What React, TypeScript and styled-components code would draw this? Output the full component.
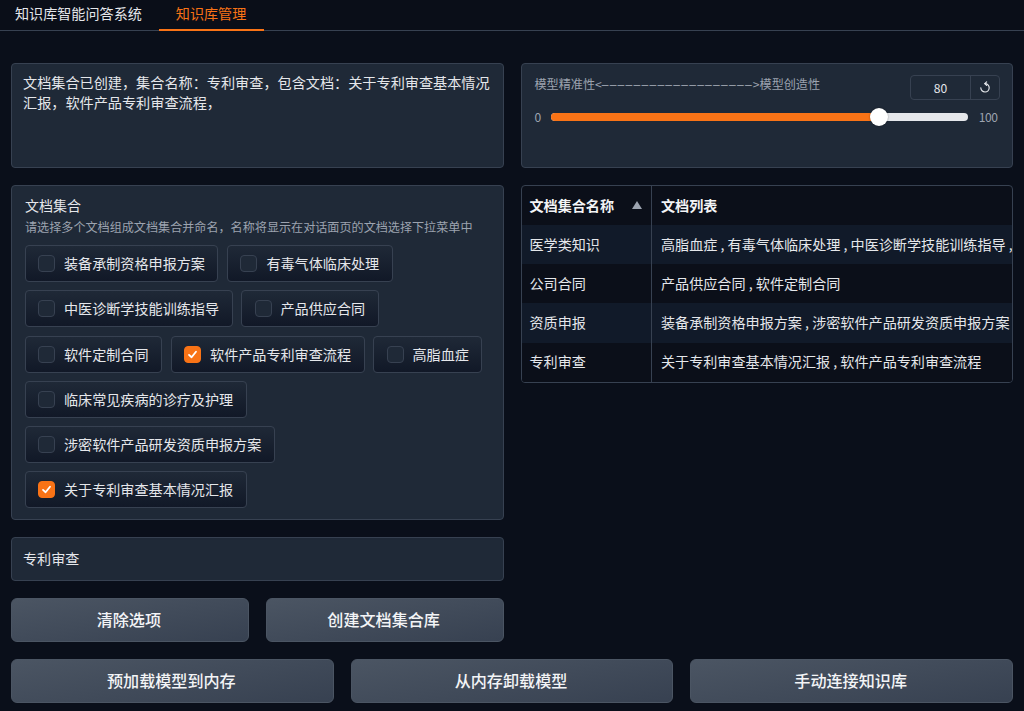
import React from "react";
import styled, { createGlobalStyle } from "styled-components";

const Global = createGlobalStyle`
  html, body { margin: 0; padding: 0; background: #0a0f1a; }
  body { font-family: "Noto Sans CJK SC", "Noto Sans", sans-serif; color: #e5e7eb; }
  * { box-sizing: border-box; }
`;

const Page = styled.div`
  width: 1024px;
  height: 711px;
  overflow: hidden;
  background: #0a0f1a;
`;
const TabBar = styled.div`
  height: 31px;
  display: flex;
  border-bottom: 1px solid #374151;
  background: #0a0e18;
`;
const Tab = styled.div<{ $active?: boolean }>`
  height: 31px;
  padding: 0 ${(p) => (p.$active ? "18px" : "17px")} 0 ${(p) => (p.$active ? "17px" : "15px")};
  font-size: 14.1px;
  line-height: 27px;
  color: ${(p) => (p.$active ? "#f97316" : "#e5e7eb")};
  border-bottom: ${(p) => (p.$active ? "2px solid #f97316" : "none")};
`;
const Main = styled.div`
  padding: 32px 11px 0;
  display: flex;
  flex-direction: column;
  gap: 17px;
`;
const Columns = styled.div`
  display: grid;
  grid-template-columns: 492.5px 492.5px;
  gap: 17px;
  align-items: start;
`;
const Column = styled.div`
  display: flex;
  flex-direction: column;
  gap: 17px;
`;
const Panel = styled.div`
  background: #1f2937;
  border: 1px solid #374151;
  border-radius: 4px;
`;
const MessageBox = styled.textarea`
  display: block;
  width: 100%;
  height: 105px;
  padding: 9px 11px;
  background: #1f2937;
  border: 1px solid #374151;
  border-radius: 4px;
  color: #e5e7eb;
  font-family: inherit;
  font-size: 14.15px;
  line-height: 19.5px;
  resize: none;
  outline: none;
  overflow: hidden;
`;
const GroupPanel = styled(Panel)`
  height: 335px;
  padding: 9px 13px 0;
`;
const GroupTitle = styled.div`
  font-size: 14px;
  line-height: 20px;
  color: #e5e7eb;
`;
const GroupHint = styled.div`
  font-size: 12.1px;
  line-height: 17px;
  margin-top: 3px;
  color: #9ca3af;
`;
const ChipRow = styled.div`
  margin: 10px 0 0 -0.5px;
  display: flex;
  flex-wrap: wrap;
  gap: 8.3px 8.5px;
`;
const Chip = styled.label`
  height: 37px;
  display: flex;
  align-items: center;
  gap: 9px;
  padding: 0 12.5px 1px;
  border: 1px solid #374151;
  border-radius: 4px;
  background: linear-gradient(180deg, #1f2937 0%, #111827 100%);
  font-size: 14.1px;
  color: #e5e7eb;
  white-space: nowrap;
`;
const Box = styled.span<{ $checked?: boolean }>`
  width: 17px;
  height: 17px;
  margin-top: 1px;
  border-radius: 4px;
  display: flex;
  align-items: center;
  justify-content: center;
  background: ${(p) => (p.$checked ? "#f97316" : "#1f2937")};
  border: 1px solid ${(p) => (p.$checked ? "#f97316" : "#374151")};
`;
const NameInput = styled.input`
  display: block;
  width: 100%;
  height: 44px;
  padding: 0 11px 3px;
  background: #1f2937;
  border: 1px solid #374151;
  border-radius: 4px;
  color: #e5e7eb;
  font-family: inherit;
  font-size: 14.1px;
  outline: none;
`;
const ButtonRow = styled.div`
  display: flex;
  gap: 17px;
`;
const Button = styled.button`
  flex: 1 1 0;
  height: 44px;
  padding: 0 2px 2px 0;
  border: 1px solid #4b5563;
  border-radius: 6px;
  background: linear-gradient(170deg, #4b5563 0%, #374151 100%);
  color: #f3f4f6;
  font-family: inherit;
  font-size: 16.1px;
  font-weight: 500;
`;
const SliderPanel = styled(Panel)`
  height: 105px;
  padding: 11px 13px 0;
`;
const SliderHead = styled.div`
  display: flex;
  justify-content: space-between;
  align-items: flex-start;
`;
const SliderLabel = styled.div`
  font-size: 12.1px;
  line-height: 18px;
  color: #9ca3af;
`;
const DashRun = styled.span`
  font-family: "Liberation Sans", sans-serif;
  letter-spacing: 1.23px;
`;
const NumberGroup = styled.div`
  width: 90px;
  height: 25px;
  margin-right: -1px;
  display: flex;
  border: 1px solid #374151;
  border-radius: 4px;
`;
const NumberValue = styled.div`
  flex: 1;
  font-size: 12.1px;
  line-height: 23px;
  text-align: center;
  color: #e5e7eb;
`;
const ResetCell = styled.div`
  width: 29px;
  border-left: 1px solid #374151;
  display: flex;
  align-items: center;
  justify-content: center;
`;
const SliderRow = styled.div`
  margin-top: 8px;
  display: flex;
  align-items: center;
  font-size: 12.1px;
  line-height: 18px;
  color: #9ca3af;
`;
const SliderMin = styled.span`
  width: 16.5px;
`;
const SliderMax = styled.span`
  width: 29.5px;
  text-align: right;
  letter-spacing: -0.5px;
`;
const Track = styled.div`
  position: relative;
  width: 417px;
  height: 8px;
  border-radius: 4px;
  background: #e5e7eb;
`;
const Fill = styled.div`
  height: 8px;
  border-radius: 4px;
  background: #f97316;
`;
const Thumb = styled.div`
  position: absolute;
  top: -5px;
  width: 18px;
  height: 18px;
  margin-left: -9px;
  border-radius: 50%;
  background: #fff;
  box-shadow: 0 0 2px rgba(0, 0, 0, 0.4);
`;
const TableWrap = styled.div`
  width: 100%;
  height: 198px;
  border: 1px solid #374151;
  border-radius: 4px;
  overflow: hidden;
  background: #0b0f19;
`;
const Table = styled.table`
  width: 100%;
  border-collapse: collapse;
  table-layout: fixed;
  font-size: 14.1px;
  color: #e5e7eb;
`;
const HeadCell = styled.th<{ $first?: boolean }>`
  height: 39px;
  padding: 0 0 2px ${(p) => (p.$first ? "8px" : "9px")};
  width: ${(p) => (p.$first ? "130px" : "auto")};
  text-align: left;
  font-weight: 700;
  color: #f3f4f6;
  border-right: ${(p) => (p.$first ? "1px solid #374151" : "none")};
  white-space: nowrap;
`;
const HeadInner = styled.div`
  display: flex;
  align-items: center;
  justify-content: space-between;
  padding-right: 9px;
`;
const Row = styled.tr<{ $alt?: boolean }>`
  background: ${(p) => (p.$alt ? "#111a29" : "#0b0f19")};
`;
const Cell = styled.td<{ $first?: boolean }>`
  height: 39.2px;
  padding: 0 0 2px ${(p) => (p.$first ? "8px" : "9px")};
  white-space: nowrap;
  border-right: ${(p) => (p.$first ? "1px solid #374151" : "none")};
`;

const chips = [
  ["装备承制资格申报方案", false],
  ["有毒气体临床处理", false],
  ["中医诊断学技能训练指导", false],
  ["产品供应合同", false],
  ["软件定制合同", false],
  ["软件产品专利审查流程", true],
  ["高脂血症", false],
  ["临床常见疾病的诊疗及护理", false],
  ["涉密软件产品研发资质申报方案", false],
  ["关于专利审查基本情况汇报", true],
] as const;

const rows = [
  ["医学类知识", "高脂血症 , 有毒气体临床处理 , 中医诊断学技能训练指导 ,"],
  ["公司合同", "产品供应合同 , 软件定制合同"],
  ["资质申报", "装备承制资格申报方案 , 涉密软件产品研发资质申报方案"],
  ["专利审查", "关于专利审查基本情况汇报 , 软件产品专利审查流程"],
];

const sliderValue = 80;
const thumbPosition = `calc(9px + (100% - 18px) * ${sliderValue / 100})`;

export default function App() {
  return (
    <Page>
      <Global />
      <TabBar>
        <Tab>知识库智能问答系统</Tab>
        <Tab $active>知识库管理</Tab>
      </TabBar>
      <Main>
        <Columns>
          <Column>
            <MessageBox readOnly value="文档集合已创建，集合名称：专利审查，包含文档：关于专利审查基本情况汇报，软件产品专利审查流程，" />
            <GroupPanel>
              <GroupTitle>文档集合</GroupTitle>
              <GroupHint>请选择多个文档组成文档集合并命名，名称将显示在对话面页的文档选择下拉菜单中</GroupHint>
              <ChipRow>
                {chips.map(([text, checked]) => (
                  <Chip key={text}>
                    <Box $checked={checked}>
                      {checked && (
                        <svg width="11" height="11" viewBox="0 0 12 12" fill="none">
                          <path d="M2.2 6.4 5 9l4.8-6" stroke="#fff" strokeWidth="2" strokeLinecap="round" strokeLinejoin="round" />
                        </svg>
                      )}
                    </Box>
                    {text}
                  </Chip>
                ))}
              </ChipRow>
            </GroupPanel>
            <NameInput readOnly value="专利审查" />
            <ButtonRow>
              <Button>清除选项</Button>
              <Button>创建文档集合库</Button>
            </ButtonRow>
          </Column>
          <Column>
            <SliderPanel>
              <SliderHead>
                <SliderLabel>模型精准性&lt;<DashRun>–––––––––––––––––––</DashRun>&gt;模型创造性</SliderLabel>
                <NumberGroup>
                  <NumberValue>{sliderValue}</NumberValue>
                  <ResetCell>
                    <svg width="12" height="13" viewBox="0 0 12 13" fill="none" stroke="#e5e7eb" strokeWidth="1.2" strokeLinecap="round" strokeLinejoin="round">
                      <path d="M6 2.6a4.2 4.2 0 1 1-4.2 4.2" />
                      <path d="M7.6 0.9 5.7 2.6l1.9 1.7" />
                    </svg>
                  </ResetCell>
                </NumberGroup>
              </SliderHead>
              <SliderRow>
                <SliderMin>0</SliderMin>
                <Track>
                  <Fill style={{ width: thumbPosition }} />
                  <Thumb style={{ left: thumbPosition }} />
                </Track>
                <SliderMax>100</SliderMax>
              </SliderRow>
            </SliderPanel>
            <TableWrap>
              <Table>
                <thead>
                  <tr>
                    <HeadCell $first>
                      <HeadInner>
                        文档集合名称
                        <svg width="10" height="8" viewBox="0 0 10 8"><path d="M5 0l5 8H0z" fill="#9ca3af" /></svg>
                      </HeadInner>
                    </HeadCell>
                    <HeadCell>文档列表</HeadCell>
                  </tr>
                </thead>
                <tbody>
                  {rows.map((r, i) => (
                    <Row key={r[0]} $alt={i % 2 === 0}>
                      <Cell $first>{r[0]}</Cell>
                      <Cell>{r[1]}</Cell>
                    </Row>
                  ))}
                </tbody>
              </Table>
            </TableWrap>
          </Column>
        </Columns>
        <ButtonRow>
          <Button>预加载模型到内存</Button>
          <Button>从内存卸载模型</Button>
          <Button>手动连接知识库</Button>
        </ButtonRow>
      </Main>
    </Page>
  );
}
